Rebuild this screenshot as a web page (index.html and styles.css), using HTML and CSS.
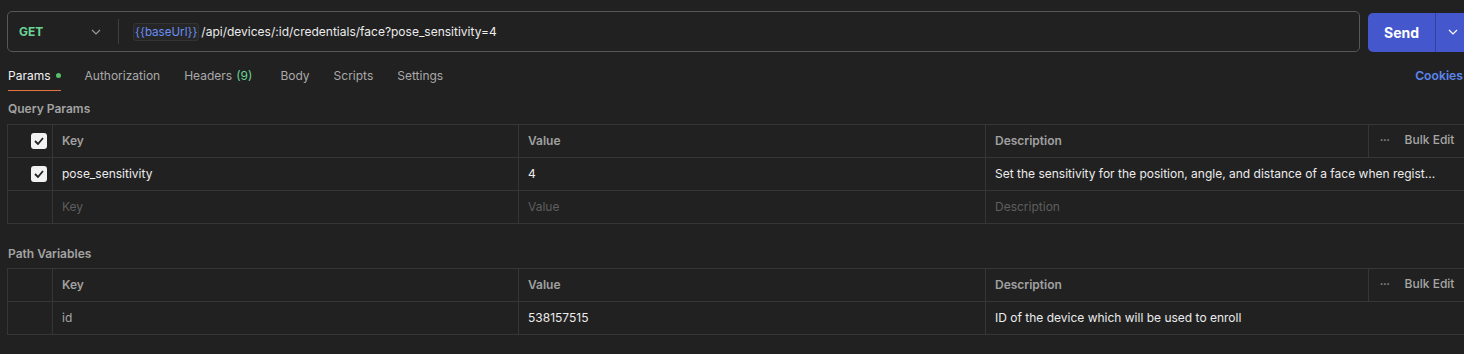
FILE: index.html
```html
<!DOCTYPE html>
<html>
<head>
<meta charset="utf-8">
<link rel="stylesheet" href="styles.css">
</head>
<body>
<div class="page">
  <div class="url-row">
    <div class="url-box">
      <div class="method">
        <span class="method-name">GET</span>
        <svg class="chev" width="10" height="6" viewBox="0 0 10 6"><path d="M1 1l4 4 4-4" fill="none" stroke="#9a9a9a" stroke-width="1.2"/></svg>
      </div>
      <div class="url-divider"></div>
      <div class="url-text"><span class="var">{{baseUrl}}</span><span class="path">/api/devices/:id/credentials/face?pose_sensitivity=4</span></div>
    </div>
    <div class="send">
      <span class="send-main">Send</span>
      <span class="send-more"><svg width="10" height="6" viewBox="0 0 10 6"><path d="M1 1l4 4 4-4" fill="none" stroke="#ffffff" stroke-width="1.2"/></svg></span>
    </div>
  </div>

  <div class="tabs">
    <div class="tab active">Params<span class="dot"></span></div>
    <div class="tab">Authorization</div>
    <div class="tab">Headers <span class="count">(9)</span></div>
    <div class="tab tab-body">Body</div>
    <div class="tab">Scripts</div>
    <div class="tab">Settings</div>
    <div class="tabs-fill"></div>
    <div class="cookies">Cookies</div>
  </div>

  <div class="section-label">Query Params</div>
  <div class="table">
    <div class="row head">
      <div class="cell c-check"><span class="checkbox"><svg width="10" height="8" viewBox="0 0 10 8"><path d="M1 4l3 3 5-6" fill="none" stroke="#222" stroke-width="1.8"/></svg></span></div>
      <div class="cell c-key">Key</div>
      <div class="cell c-val">Value</div>
      <div class="cell c-desc">Description</div>
      <div class="cell c-bulk"><span class="dots">•••</span>Bulk Edit</div>
    </div>
    <div class="row">
      <div class="cell c-check"><span class="checkbox"><svg width="10" height="8" viewBox="0 0 10 8"><path d="M1 4l3 3 5-6" fill="none" stroke="#222" stroke-width="1.8"/></svg></span></div>
      <div class="cell c-key val-text">pose_sensitivity</div>
      <div class="cell c-val val-text">4</div>
      <div class="cell c-desc c-desc-wide val-text">Set the sensitivity for the position, angle, and distance of a face when regist...</div>
    </div>
    <div class="row">
      <div class="cell c-check"></div>
      <div class="cell c-key ph">Key</div>
      <div class="cell c-val ph">Value</div>
      <div class="cell c-desc c-desc-wide ph">Description</div>
    </div>
  </div>

  <div class="section-label path-label">Path Variables</div>
  <div class="table">
    <div class="row head">
      <div class="cell c-check"></div>
      <div class="cell c-key">Key</div>
      <div class="cell c-val">Value</div>
      <div class="cell c-desc">Description</div>
      <div class="cell c-bulk"><span class="dots">•••</span>Bulk Edit</div>
    </div>
    <div class="row">
      <div class="cell c-check"></div>
      <div class="cell c-key dim-text">id</div>
      <div class="cell c-val val-text">538157515</div>
      <div class="cell c-desc c-desc-wide val-text">ID of the device which will be used to enroll</div>
    </div>
  </div>
</div>
</body>
</html>
```

FILE: styles.css
```css
html, body {
  margin: 0;
  padding: 0;
  background: #212121;
  overflow: hidden;
}
body {
  font-family: Inter, "Noto Sans", sans-serif;
  color: #e6e6e6;
  font-size: 12px;
}
.page {
  width: 1464px;
  height: 354px;
  box-sizing: border-box;
  padding-left: 7px;
  overflow: hidden;
}
.url-row {
  display: flex;
  align-items: center;
  padding-top: 11px;
  gap: 8px;
  width: 1490px;
}
.url-box {
  width: 1351px;
  height: 39px;
  border: 1px solid #575757;
  border-radius: 5px;
  display: flex;
  align-items: center;
  flex-shrink: 0;
}
.method {
  width: 98px;
  display: flex;
  align-items: center;
  justify-content: space-between;
  padding-left: 11px;
  padding-right: 5px;
  box-sizing: border-box;
}
.method-name {
  color: #6bd495;
  font-weight: 700;
  font-size: 12px;
}
.url-divider {
  width: 1px;
  height: 25px;
  background: #3f3f3f;
  margin-left: 12px;
  margin-right: 14px;
}
.url-text {
  display: flex;
  align-items: center;
  font-size: 12px;
  color: #ececec;
}
.var {
  color: #6a8ef5;
  background: #262626;
  border: 1px solid #333333;
  border-radius: 3px;
  padding: 1px 1px;
  margin-right: 2px;
  font-size: 11.6px;
}
.send {
  height: 39px;
  margin-top: 1px;
  display: flex;
  align-items: stretch;
  background: #4457cd;
  border-radius: 5px;
  color: #fff;
  flex-shrink: 0;
}
.send-main {
  width: 67px;
  display: flex;
  align-items: center;
  justify-content: center;
  font-weight: 700;
  font-size: 14px;
  border-right: 1px solid #34429c;
}
.send-more {
  width: 34px;
  display: flex;
  align-items: center;
  justify-content: center;
}
.tabs {
  display: flex;
  align-items: center;
  margin-top: 10px;
  height: 29px;
  padding-left: 1px;
  width: 1456px;
  box-sizing: border-box;
}
.tab {
  font-size: 12px;
  color: #a9a9a9;
  height: 29px;
  display: flex;
  align-items: center;
  margin-right: 24px;
  box-sizing: border-box;
  padding-bottom: 3px;
}
.tab.active {
  color: #f2f2f2;
  border-bottom: 1.5px solid #e6733f;
  padding-bottom: 2px;
}
.dot {
  width: 5px;
  height: 5px;
  border-radius: 50%;
  background: #55c26a;
  margin-left: 5px;
}
.count {
  color: #6bd495;
  margin-left: 4px;
}
.tab-body {
  margin-left: 4px;
}
.tabs-fill {
  flex: 1;
}
.cookies {
  color: #5b86ee;
  font-weight: 600;
  font-size: 12.2px;
  padding-bottom: 3px;
  white-space: nowrap;
}
.section-label {
  color: #a3a3a3;
  font-weight: 600;
  font-size: 12px;
  height: 30px;
  display: flex;
  align-items: center;
  padding-left: 1px;
  padding-bottom: 2px;
  box-sizing: border-box;
  margin-top: 3px;
}
.path-label {
  margin-top: 16px;
  height: 28px;
}
.table {
  border-top: 1px solid #363636;
  border-left: 1px solid #363636;
  width: 1500px;
}
.row {
  display: flex;
  height: 33px;
  border-bottom: 1px solid #363636;
  box-sizing: border-box;
}
.cell {
  flex-shrink: 0;
  display: flex;
  align-items: center;
  box-sizing: border-box;
  border-right: 1px solid #363636;
  padding-left: 9px;
  padding-bottom: 1px;
  white-space: nowrap;
}
.c-check {
  width: 45px;
  justify-content: flex-end;
  padding-right: 5px;
}
.c-key { width: 466px; }
.c-val { width: 467px; }
.c-desc { width: 383px; }
.c-desc-wide { width: 600px; border-right: none; }
.c-bulk {
  width: 120px;
  border-right: none;
  color: #9a9a9a;
  font-weight: 500;
  padding-left: 11px;
}
.head .cell {
  color: #a0a0a0;
  font-weight: 600;
}
.head .c-bulk {
  font-weight: 500;
  color: #a6a6a6;
  padding-bottom: 3px;
}
.dots {
  font-size: 6px;
  color: #8c8c8c;
  margin-right: 15px;
}
.val-text { color: #ececec; }
.dim-text { color: #a6a6a6; }
.ph { color: #5e5e5e; }
.checkbox {
  width: 16px;
  height: 16px;
  border-radius: 3px;
  background: #f2f2f2;
  display: flex;
  align-items: center;
  justify-content: center;
}
```
